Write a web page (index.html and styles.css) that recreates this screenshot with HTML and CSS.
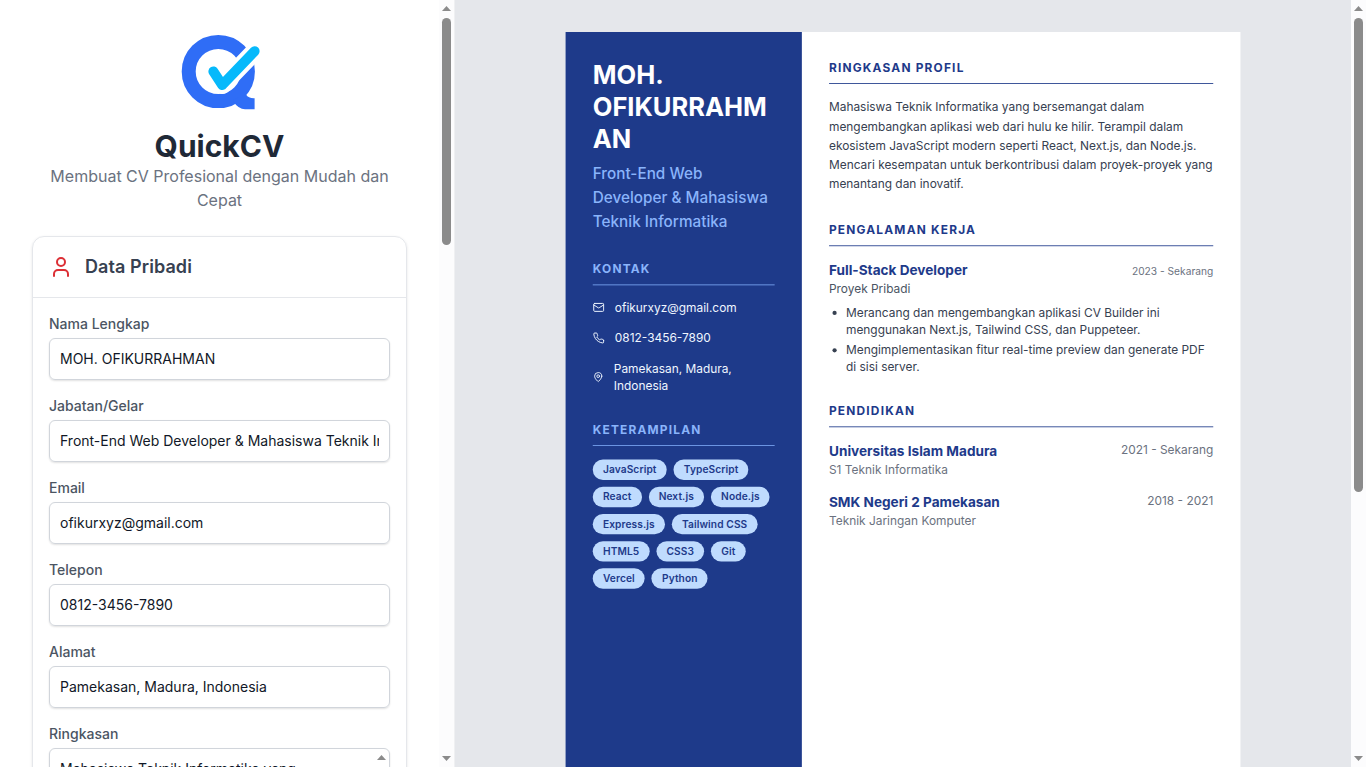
FILE: index.html
```html
<!DOCTYPE html>
<html lang="id">
<head>
<meta charset="utf-8">
<title>QuickCV</title>
<link rel="stylesheet" href="styles.css">
</head>
<body>
<div class="app">
  <aside class="editor">
    <div class="editor-content">
      <header class="brand">
        <svg class="brand-logo" viewBox="0 0 80 80" fill="none">
          <circle cx="38.3" cy="39.5" r="29.6" stroke="#2f6df6" stroke-width="14"/>
          <path d="M53 68 L66 62.5 Q68.5 66.6 74.6 66.3 V77.2 H65 Q58.5 77 54 70.5Z" fill="#2f6df6"/>
          <path d="M33 39.5 L42.2 53 L75 19" stroke="#fff" stroke-width="18" stroke-linecap="round" stroke-linejoin="round"/>
          <path d="M33.4 39.5 L42.2 53 L74.6 19.2" stroke="#06b9fb" stroke-width="10" stroke-linecap="round" stroke-linejoin="round"/>
        </svg>
        <h1 class="brand-name">QuickCV</h1>
        <p class="brand-tagline">Membuat CV Profesional dengan Mudah dan Cepat</p>
      </header>
      <section class="card">
        <div class="card-header">
          <svg class="card-icon" viewBox="0 0 24 24"><path d="M19 21v-2a4 4 0 0 0-4-4H9a4 4 0 0 0-4 4v2"/><circle cx="12" cy="7" r="4"/></svg>
          <h2 class="card-title">Data Pribadi</h2>
        </div>
        <div class="card-body">
          <div class="field"><span class="label">Nama Lengkap</span><div class="input"><span class="input-text">MOH. OFIKURRAHMAN</span></div></div>
          <div class="field"><span class="label">Jabatan/Gelar</span><div class="input"><span class="input-text">Front-End Web Developer &amp; Mahasiswa Teknik Informatika</span></div></div>
          <div class="field"><span class="label">Email</span><div class="input"><span class="input-text">ofikurxyz@gmail.com</span></div></div>
          <div class="field"><span class="label">Telepon</span><div class="input"><span class="input-text">0812-3456-7890</span></div></div>
          <div class="field"><span class="label">Alamat</span><div class="input"><span class="input-text">Pamekasan, Madura, Indonesia</span></div></div>
          <div class="field"><span class="label">Ringkasan</span><div class="input textarea"><span class="input-text">Mahasiswa Teknik Informatika yang</span><span class="arrow-up"></span></div></div>
        </div>
      </section>
    </div>
    <div class="scrollbar"><span class="arrow-up"></span><span class="thumb thumb-editor"></span><span class="arrow-down"></span></div>
  </aside>

  <main class="preview">
    <div class="preview-content">
      <article class="cv">
        <div class="cv-side">
          <h1 class="cv-name">MOH. OFIKURRAHMAN</h1>
          <p class="cv-role">Front-End Web Developer &amp; Mahasiswa Teknik Informatika</p>
          <section class="cv-section">
            <h2 class="cv-heading">Kontak</h2>
            <ul class="contacts">
              <li class="contact"><svg class="contact-icon" viewBox="0 0 24 24"><rect x="2" y="4" width="20" height="16" rx="2"/><path d="m22 7-8.97 5.7a1.94 1.94 0 0 1-2.06 0L2 7"/></svg><span>ofikurxyz@gmail.com</span></li>
              <li class="contact"><svg class="contact-icon" viewBox="0 0 24 24"><path d="M22 16.92v3a2 2 0 0 1-2.18 2 19.79 19.79 0 0 1-8.63-3.07 19.5 19.5 0 0 1-6-6 19.79 19.79 0 0 1-3.07-8.67A2 2 0 0 1 4.11 2h3a2 2 0 0 1 2 1.72 12.84 12.84 0 0 0 .7 2.81 2 2 0 0 1-.45 2.11L8.09 9.91a16 16 0 0 0 6 6l1.27-1.27a2 2 0 0 1 2.11-.45 12.84 12.84 0 0 0 2.81.7A2 2 0 0 1 22 16.92z"/></svg><span>0812-3456-7890</span></li>
              <li class="contact"><svg class="contact-icon" viewBox="0 0 24 24"><path d="M20 10c0 6-8 12-8 12s-8-6-8-12a8 8 0 0 1 16 0Z"/><circle cx="12" cy="10" r="3"/></svg><span>Pamekasan, Madura, Indonesia</span></li>
            </ul>
          </section>
          <section class="cv-section">
            <h2 class="cv-heading">Keterampilan</h2>
            <div class="tags">
              <span class="tag">JavaScript</span><span class="tag">TypeScript</span><span class="tag">React</span><span class="tag">Next.js</span><span class="tag">Node.js</span><span class="tag">Express.js</span><span class="tag">Tailwind CSS</span><span class="tag">HTML5</span><span class="tag">CSS3</span><span class="tag">Git</span><span class="tag">Vercel</span><span class="tag">Python</span>
            </div>
          </section>
        </div>
        <div class="cv-main">
          <section class="cv-section">
            <h2 class="cv-heading">Ringkasan Profil</h2>
            <p class="summary">Mahasiswa Teknik Informatika yang bersemangat dalam mengembangkan aplikasi web dari hulu ke hilir. Terampil dalam ekosistem JavaScript modern seperti React, Next.js, dan Node.js. Mencari kesempatan untuk berkontribusi dalam proyek-proyek yang menantang dan inovatif.</p>
          </section>
          <section class="cv-section">
            <h2 class="cv-heading">Pengalaman Kerja</h2>
            <div class="entry-row entry-row-baseline"><h3 class="entry-title">Full-Stack Developer</h3><span class="date date-small">2023 - Sekarang</span></div>
            <p class="entry-org">Proyek Pribadi</p>
            <ul class="bullets">
              <li>Merancang dan mengembangkan aplikasi CV Builder ini menggunakan Next.js, Tailwind CSS, dan Puppeteer.</li>
              <li>Mengimplementasikan fitur real-time preview dan generate PDF di sisi server.</li>
            </ul>
          </section>
          <section class="cv-section">
            <h2 class="cv-heading">Pendidikan</h2>
            <div class="education">
              <div class="entry-row"><div><h3 class="entry-title">Universitas Islam Madura</h3><p class="entry-study">S1 Teknik Informatika</p></div><span class="date">2021 - Sekarang</span></div>
              <div class="entry-row"><div><h3 class="entry-title">SMK Negeri 2 Pamekasan</h3><p class="entry-study">Teknik Jaringan Komputer</p></div><span class="date">2018 - 2021</span></div>
            </div>
          </section>
        </div>
      </article>
    </div>
    <div class="scrollbar"><span class="arrow-up"></span><span class="thumb thumb-preview"></span><span class="arrow-down"></span></div>
  </main>
</div>
</body>
</html>
```

FILE: styles.css
```css
* { box-sizing: border-box; margin: 0; padding: 0; }
body { font-family: Inter, "Liberation Sans", sans-serif; font-size: 16px; line-height: 24px; color: #1f2937; overflow: hidden; }
ul { list-style: none; }

.app { display: flex; height: 767px; overflow: hidden; }

/* editor panel */
.editor { display: flex; width: 454px; flex: none; background: #fff; }
.editor-content { flex: 1; min-width: 0; padding: 32px; }
.brand { display: flex; flex-direction: column; align-items: center; text-align: center; margin-bottom: 24px; }
.brand-logo { width: 80px; height: 80px; margin-bottom: 16px; }
.brand-name { font-size: 30px; line-height: 36px; font-weight: 700; color: #1f2937; }
.brand-tagline { color: #6b7280; }

.card { border: 1px solid #e5e7eb; border-radius: 12px; box-shadow: 0 1px 3px rgba(0, 0, 0, .1); }
.card-header { display: flex; align-items: center; gap: 12px; padding: 16px; border-bottom: 1px solid #e5e7eb; }
.card-icon { width: 24px; height: 24px; fill: none; stroke: #dc2f35; stroke-width: 2; stroke-linecap: round; stroke-linejoin: round; }
.card-title { font-size: 18px; line-height: 28px; font-weight: 600; letter-spacing: .08px; color: #374151; }
.card-body { display: flex; flex-direction: column; gap: 16px; padding: 16px; }
.field { display: flex; flex-direction: column; gap: 4px; }
.label { font-size: 14px; line-height: 20px; font-weight: 500; color: #4b5563; }
.input { display: flex; justify-content: space-between; height: 42px; padding: 10px; border: 1px solid #d1d5db; border-radius: 6px; box-shadow: 0 1px 2px rgba(0, 0, 0, .12); font-size: 14px; line-height: 20px; color: #111827; }
.input-text { overflow: hidden; white-space: nowrap; }
.textarea { height: 96px; padding-right: 3px; }
.textarea .arrow-up { margin-top: -4px; }

/* scrollbars */
.scrollbar { display: flex; flex-direction: column; align-items: center; width: 15px; flex: none; padding: 6px 0; background: #fcfcfd; }
.arrow-up, .arrow-down { width: 9px; height: 5px; flex: none; background: #8b8b8b; }
.arrow-up { clip-path: polygon(50% 0, 100% 100%, 0 100%); }
.arrow-down { margin-top: auto; clip-path: polygon(0 0, 100% 0, 50% 100%); }
.thumb { width: 9px; margin-top: 7px; border-radius: 5px; background: #8b8b8b; }
.thumb-editor { height: 227px; }
.thumb-preview { height: 474px; }

/* preview panel */
.preview { display: flex; flex: 1; min-width: 0; border-left: 1px solid #eff0f2; background: #e5e7eb; }
.preview-content { display: flex; justify-content: center; align-items: flex-start; flex: 1; min-width: 0; padding: 32px; }

/* A4 page shown at 85% */
.cv { display: flex; flex: none; width: 794px; height: 1123px; background: #fff; transform: scale(.85); transform-origin: top center; font-size: 14px; line-height: 20px; }
.cv-side { width: 35%; flex: none; padding: 32px; background: #1e3a8a; color: #fff; }
.cv-main { flex: 1; min-width: 0; padding: 32px; color: #374151; }
.cv-name { font-size: 30px; line-height: 37.5px; font-weight: 700; overflow-wrap: break-word; }
.cv-role { margin: 8px 0 32px; font-size: 18px; line-height: 28px; font-weight: 500; color: #8ab4fb; }
.cv-section + .cv-section { margin-top: 32px; }
.cv-heading { margin-bottom: 16px; padding-bottom: 8px; border-bottom: 1px solid #1e3a8a; font-size: 14px; line-height: 20px; font-weight: 700; letter-spacing: .1em; text-transform: uppercase; color: #1e3a8a; }
.cv-side .cv-heading { color: #8ab4fb; border-color: #7aa5f3; }

.contacts { display: flex; flex-direction: column; gap: 16px; }
.contact { display: flex; align-items: center; gap: 12px; color: #eff6ff; }
.contact-icon { width: 14px; height: 14px; fill: none; stroke: currentColor; stroke-width: 2; stroke-linecap: round; stroke-linejoin: round; }
.tags { display: flex; flex-wrap: wrap; gap: 8px; }
.tag { padding: 4px 12px; border-radius: 12px; background: #bfdbfe; color: #1e3a8a; font-size: 12px; line-height: 16px; font-weight: 600; letter-spacing: .1px; }

.summary { line-height: 22.75px; }
.entry-row { display: flex; justify-content: space-between; }
.entry-row-baseline { align-items: baseline; }
.entry-title { font-size: 16px; line-height: 24px; font-weight: 700; color: #1e3a8a; }
.entry-org { color: #4b5563; }
.entry-study, .date { color: #6b7280; }
.date-small { font-size: 12px; line-height: 16px; }
.bullets { display: flex; flex-direction: column; gap: 4px; margin-top: 8px; padding-left: 20px; list-style: disc; }
.education { display: flex; flex-direction: column; gap: 16px; }
```
